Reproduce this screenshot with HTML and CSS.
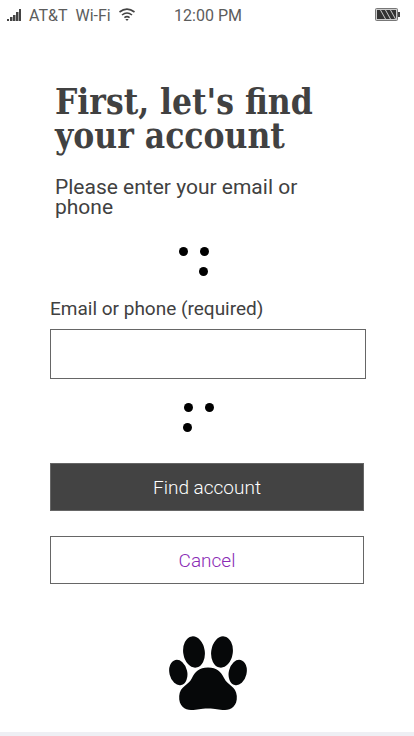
FILE: index.html
```html
<!DOCTYPE html>
<html lang="en">
<head>
<meta charset="utf-8">
<meta name="viewport" content="width=device-width, initial-scale=1">
<title>Find your account</title>
<link rel="stylesheet" href="styles.css">
</head>
<body>
<header class="status">
  <div class="carrier">
    <svg width="14" height="14" viewBox="0 0 14 14" fill="#444" aria-hidden="true"><path d="M0 11h2v2H0zM3 9h2.500v4H3zM6 7h2.500v6H6zM9 4h2.500v9H9zM12 1h2v12h-2z"/></svg>
    <span>AT&amp;T</span>
    <span>Wi-Fi</span>
    <svg width="16" height="14" viewBox="0 0 16 14" fill="none" stroke="#444" stroke-width="1.6" aria-hidden="true"><path d="M.5 4Q8-1.8 15.500 4M3 7Q8 3 13 7M5.400 9.600Q8 7.600 10.600 9.600"/><path d="M6.300 11h3.400L8 13z" fill="#444" stroke="none"/></svg>
  </div>
  <span class="time">12:00 PM</span>
  <svg class="battery" width="26" height="14" viewBox="0 0 26 14" aria-hidden="true"><rect x=".5" y=".5" width="22" height="12" rx="1" fill="#ccc" stroke="#777"/><path d="M2 2h3l5 9H2zM6 2h4l5 9h-4zM11 2h4l5 9h-4zM16 2h5v9z" fill="#333"/><path d="M23 4h2v5h-2z" fill="#444"/></svg>
</header>
<main>
  <h1>First, let's find your account</h1>
  <p class="intro">Please enter your email or phone</p>
  <svg class="dots" viewBox="0 0 58 30" aria-hidden="true"><circle cx="4.500" cy="4.500" r="4.500"/><circle cx="25.500" cy="4.500" r="4.500"/><circle cx="24.500" cy="24.500" r="4.500"/></svg>
  <form>
    <label for="contact">Email or phone (required)</label>
    <input id="contact" type="text" required>
    <svg class="dots dots-lower" viewBox="0 0 58 30" aria-hidden="true"><circle cx="9.500" cy="4.500" r="4.500"/><circle cx="30.500" cy="4.500" r="4.500"/><circle cx="8.500" cy="24.500" r="4.500"/></svg>
    <button class="primary" type="submit">Find account</button>
    <a class="cancel" href="#">Cancel</a>
  </form>
  <svg class="paw" width="78" height="75" viewBox="0 0 78 75" fill="#060809" aria-hidden="true">
    <ellipse cx="25" cy="16" rx="10.800" ry="15.700" transform="rotate(-8 25 16)"/>
    <ellipse cx="53" cy="16" rx="10.800" ry="15.700" transform="rotate(8 53 16)"/>
    <ellipse cx="9.300" cy="36.500" rx="8.900" ry="12.900" transform="rotate(-13 9.300 36.500)"/>
    <ellipse cx="68.700" cy="36.500" rx="8.900" ry="12.900" transform="rotate(13 68.700 36.500)"/>
    <path d="M39 31.500C48 31.500 52 36 55 42C59 50 67 50 67.800 60C68.500 70 62 74 56 74C49 74 47 72.500 39 72.500S29 74 22 74C16 74 9.500 70 10.200 60C11 50 19 50 23 42C26 36 30 31.500 39 31.500Z"/>
  </svg>
</main>
<footer></footer>
</body>
</html>
```
FILE: styles.css
```css
* { box-sizing: border-box; }
body {
  margin: 0;
  min-height: 100vh;
  display: flex;
  flex-direction: column;
  background: #fff;
  color: #414141;
  font-family: Roboto, "Liberation Sans", sans-serif;
}
svg { display: block; }
.status {
  display: grid;
  grid-template-columns: 1fr auto 1fr;
  align-items: center;
  height: 30px;
  padding: 0 13px 0 7px;
  font-size: 16px;
  color: #5c5c5c;
}
.carrier { display: flex; align-items: center; gap: 8px; }
.time { padding-left: 8px; }
.battery { justify-self: end; }
main { padding: 55px 48px 0 50px; }
h1 {
  margin: 0 0 0 5px;
  font-family: "Roboto Slab", "DejaVu Serif Condensed", "DejaVu Serif", serif;
  font-size: 35px;
  line-height: 34px;
  font-weight: 700;
}
.intro {
  margin: 24px 60px 0 5px;
  font-size: 21px;
  line-height: 20px;
}
.dots { width: 58px; height: 30px; margin: 30px auto 0; }
form { display: flex; flex-direction: column; }
label {
  margin-top: 22px;
  font-size: 19px;
  line-height: 20px;
}
input {
  height: 50px;
  margin-top: 10px;
  padding: 0 12px;
  border: 1px solid #666;
  border-radius: 0;
  background: #fff;
  font: inherit;
}
.dots-lower { margin-top: 24px; }
.primary, .cancel {
  display: flex;
  align-items: center;
  justify-content: center;
  height: 48px;
  margin-right: 2px;
  border: 1px solid #666;
  font: 300 19px Roboto, "Liberation Sans", sans-serif;
  text-decoration: none;
}
.primary { margin-top: 30px; background: #434343; color: #fff; }
.cancel { margin-top: 25px; color: #8a2bb5; }
.paw { margin: 52px auto 20px; }
footer { height: 4px; margin-top: auto; background: #eeeff4; }
```
